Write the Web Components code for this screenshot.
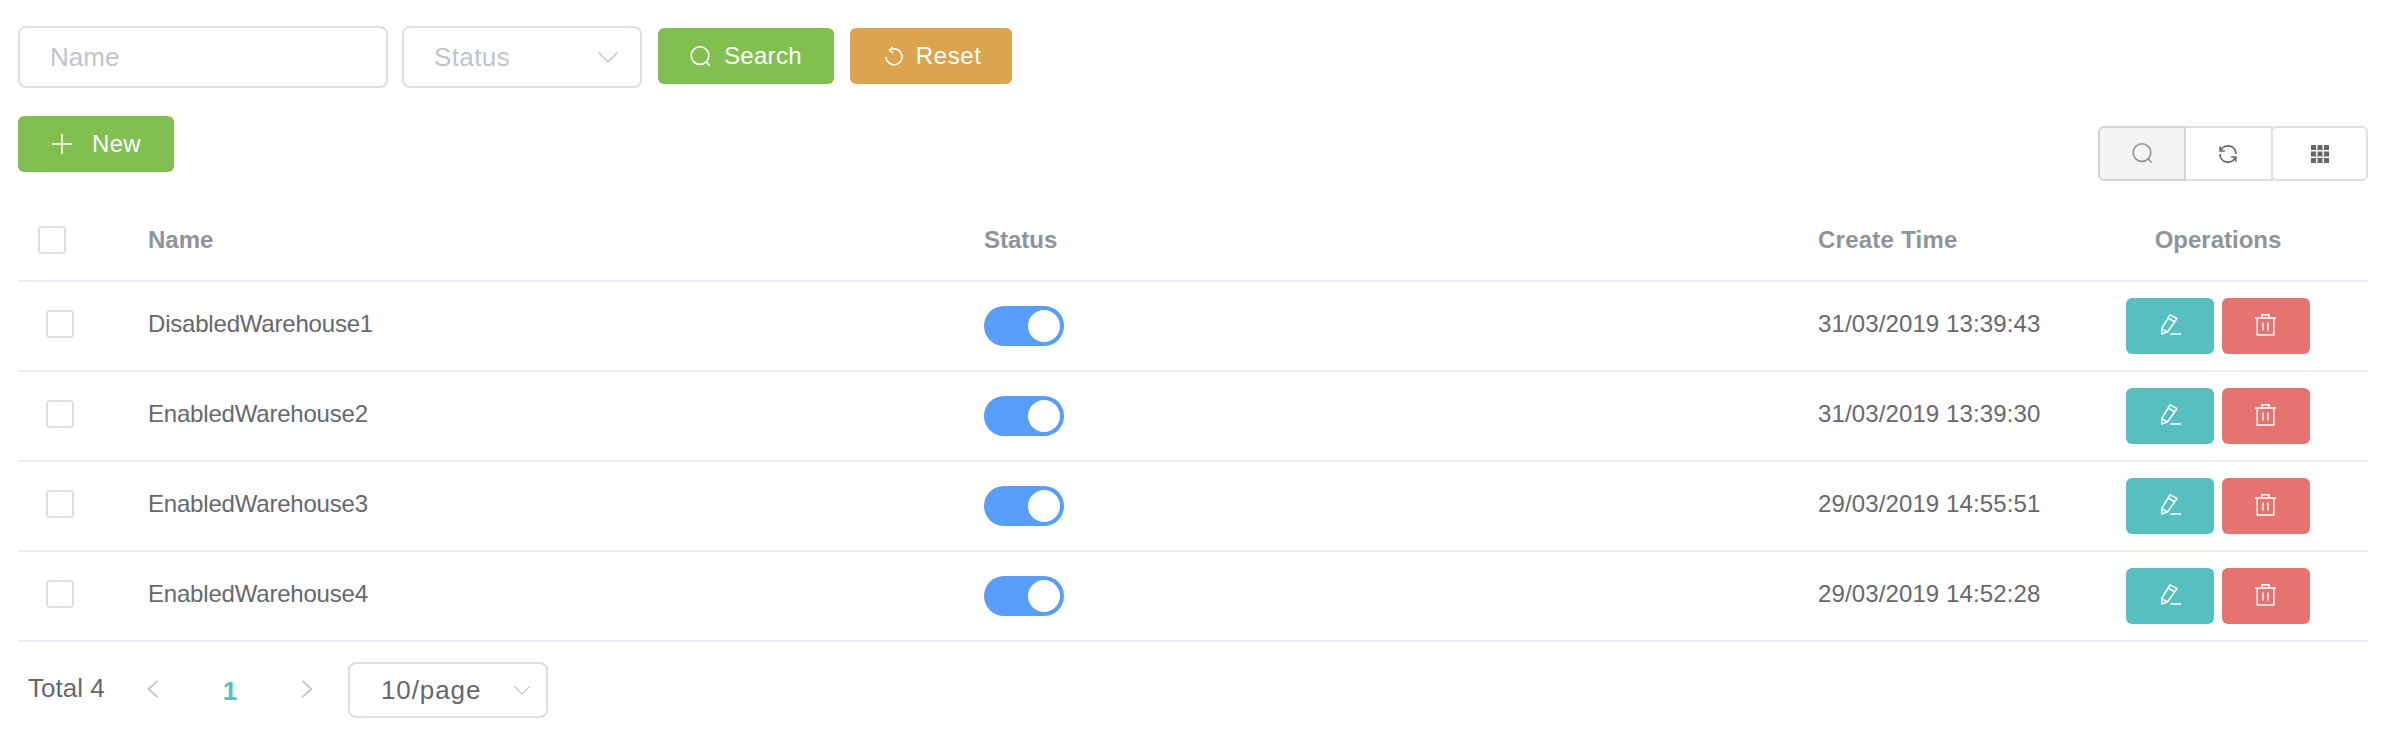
<!DOCTYPE html>
<html lang="en">
<head>
<meta charset="utf-8">
<title>Warehouses</title>
<style>
  html, body { margin: 0; background: #fff; }
  body { font-family: "Liberation Sans", Arial, sans-serif; color: #606266; }
</style>
</head>
<body>
<warehouse-page></warehouse-page>

<script>
  const ICONS = {
    search: `<svg width="21" height="21" viewBox="0 0 21 21" fill="none" stroke="currentColor" stroke-width="1.6"><circle cx="10" cy="9.6" r="8.8"/><path d="M16.4 15.8l3.2 4"/></svg>`,
    reset: `<svg width="18" height="19" viewBox="0 0 18 19" fill="none" stroke="currentColor" stroke-width="1.6"><path d="M5.6 2.6A8 8 0 1 1 1 10"/><path d="M8 .4L4.6 3l3.4 3"/></svg>`,
    plus: `<svg width="20" height="20" viewBox="0 0 20 20" fill="none" stroke="currentColor" stroke-width="1.6"><path d="M10 0v20M0 10h20"/></svg>`,
    chevronDown: `<svg viewBox="0 0 20 11" fill="none" stroke="currentColor" stroke-width="1.4"><path d="M.6.6L10 10 19.4.6"/></svg>`,
    refresh: `<svg width="18" height="18" viewBox="0 0 18 18" fill="none" stroke="currentColor" stroke-width="1.7"><path d="M2 5A8 8 0 0 1 17 9"/><path d="M16 13A8 8 0 0 1 1 9"/><path d="M5.8 6H1.2V1.4"/><path d="M12.2 12h4.6v4.6"/></svg>`,
    grid: `<svg width="18" height="18" viewBox="0 0 18 18" fill="currentColor"><path d="M0 0h5v5H0zM6.5 0h5v5h-5zM13 0h5v5h-5zM0 6.5h5v5H0zM6.5 6.5h5v5h-5zM13 6.5h5v5h-5zM0 13h5v5H0zM6.5 13h5v5h-5zM13 13h5v5h-5z"/></svg>`,
    edit: `<svg width="20" height="21" viewBox="0 0 20 21" fill="none" stroke="currentColor" stroke-width="1.5"><path d="M9 .8l7 3.8-9.4 13.2L1 20 .7 14.6z"/><path d="M7.2 4l6.8 4"/><path d="M.9 15l5.7 2.8"/><path d="M9.3 20H20"/></svg>`,
    trash: `<svg width="21" height="22" viewBox="0 0 21 22" fill="none" stroke="currentColor" stroke-width="1.5"><path d="M0 4h21"/><path d="M7 4V.8h7V4"/><path d="M2.2 4v17h16.6V4"/><path d="M8 8.4v8.2M13 8.4v8.2"/></svg>`
  };

  class ElInput extends HTMLElement {
    constructor() {
      super();
      this.attachShadow({ mode: 'open' });
      this.shadowRoot.innerHTML = `
        <style>
          :host {
            display: flex;
            align-items: center;
            box-sizing: border-box;
            height: 62px;
            padding: 0 30px;
            border: 2px solid #dcdfe6;
            border-radius: 8px;
            background: #fff;
            color: #c0c4cc;
            font-size: 26px;
          }
        </style>
        <slot></slot>
      `;
    }
  }

  class ElSelect extends HTMLElement {
    constructor() {
      super();
      this.attachShadow({ mode: 'open' });
      this.shadowRoot.innerHTML = `
        <style>
          :host {
            display: flex;
            align-items: center;
            justify-content: space-between;
            box-sizing: border-box;
            height: 62px;
            padding: 0 22px 0 30px;
            border: 2px solid #dcdfe6;
            border-radius: 8px;
            background: #fff;
            color: #c0c4cc;
            font-size: 26px;
            letter-spacing: 0.4px;
          }
          svg {
            display: block;
            width: var(--chevron-width, 20px);
            color: #c0c4cc;
          }
        </style>
        <slot></slot>
        ${ICONS.chevronDown}
      `;
    }
  }

  class ElButton extends HTMLElement {
    static get observedAttributes() {
      return ['icon'];
    }

    constructor() {
      super();
      this.attachShadow({ mode: 'open' });
    }

    connectedCallback() {
      this.render();
    }

    attributeChangedCallback() {
      this.render();
    }

    render() {
      const icon = ICONS[this.getAttribute('icon')] || '';
      this.shadowRoot.innerHTML = `
        <style>
          :host {
            display: inline-flex;
            align-items: center;
            justify-content: center;
            box-sizing: border-box;
            height: 56px;
            gap: var(--btn-gap, 13px);
            padding: 0 32px;
            border-radius: 6px;
            background: var(--btn-bg, #80bf50);
            color: #fff;
            font-size: 24px;
            letter-spacing: 0.3px;
          }
          svg {
            display: block;
            margin: var(--icon-shift, 0) 0 0 var(--icon-x, 0);
          }
        </style>
        ${icon}<slot></slot>
      `;
    }
  }

  class ElCheckbox extends HTMLElement {
    constructor() {
      super();
      this.attachShadow({ mode: 'open' });
      this.shadowRoot.innerHTML = `
        <style>
          :host {
            display: block;
            box-sizing: border-box;
            width: 28px;
            height: 28px;
            border: 2px solid #dcdfe6;
            border-radius: 4px;
            background: #fff;
          }
        </style>
      `;
    }
  }

  class ElSwitch extends HTMLElement {
    constructor() {
      super();
      this.attachShadow({ mode: 'open' });
      this.shadowRoot.innerHTML = `
        <style>
          :host {
            display: flex;
            justify-content: flex-end;
            align-items: center;
            box-sizing: border-box;
            width: 80px;
            height: 40px;
            padding-right: 4px;
            border-radius: 20px;
            background: #589ef8;
          }
          i {
            display: block;
            width: 32px;
            height: 32px;
            border-radius: 50%;
            background: #fff;
          }
        </style>
        <i></i>
      `;
    }
  }

  class TableTools extends HTMLElement {
    constructor() {
      super();
      this.attachShadow({ mode: 'open' });
      this.shadowRoot.innerHTML = `
        <style>
          :host {
            display: flex;
            height: 55px;
            margin-top: 10px;
            color: #66666a;
          }
          div {
            display: flex;
            align-items: center;
            justify-content: center;
            box-sizing: border-box;
            border: 2px solid #dcdfe6;
            background: #fff;
          }
          .search {
            width: 88px;
            border-color: #d3d4d6;
            border-radius: 6px 0 0 6px;
            background: #f4f4f5;
            color: #909399;
          }
          .refresh {
            width: 87px;
            padding-right: 2px;
            border-left: 0;
          }
          .grid {
            width: 97px;
            margin-left: -2px;
            border-radius: 6px;
          }
          svg { display: block; }
        </style>
        <div class="search">${ICONS.search}</div>
        <div class="refresh">${ICONS.refresh}</div>
        <div class="grid">${ICONS.grid}</div>
      `;
    }
  }

  class WarehouseTable extends HTMLElement {
    constructor() {
      super();
      this.attachShadow({ mode: 'open' });
    }

    get rows() {
      return [
        ['DisabledWarehouse1', '31/03/2019 13:39:43'],
        ['EnabledWarehouse2', '31/03/2019 13:39:30'],
        ['EnabledWarehouse3', '29/03/2019 14:55:51'],
        ['EnabledWarehouse4', '29/03/2019 14:52:28']
      ];
    }

    connectedCallback() {
      this.render();
    }

    render() {
      this.shadowRoot.innerHTML = `
        <style>
          :host {
            display: block;
            font-size: 24px;
            color: #66686d;
          }
          .row {
            display: grid;
            grid-template-columns: 130px 836px 834px 250px 300px;
            align-items: center;
            border-bottom: 2px solid #ebeef5;
          }
          .head {
            padding: 45px 0 26px;
            color: #909399;
            font-weight: 700;
          }
          .head el-checkbox { margin-left: 20px; }
          .created { letter-spacing: 0.25px; }
          .body { height: 88px; }
          .body el-checkbox { margin: 0 0 4px 28px; }
          .body span { margin-bottom: 4px; }
          .name { letter-spacing: -0.2px; }
          .time { letter-spacing: 0.12px; }
          .ops {
            display: flex;
            justify-content: center;
            gap: 8px;
            --icon-shift: -3px;
          }
          .ops-head { text-align: center; }
          .ops el-button {
            width: 88px;
            padding: 0;
          }
          .edit {
            --btn-bg: #58bfc0;
            --icon-x: 2px;
          }
          .remove {
            --btn-bg: #e57470;
            --icon-x: -2px;
          }
        </style>
        <div class="row head">
          <el-checkbox></el-checkbox>
          <span>Name</span>
          <span>Status</span>
          <span class="created">Create Time</span>
          <span class="ops-head">Operations</span>
        </div>
        ${this.rows.map(([name, time]) => `
          <div class="row body">
            <el-checkbox></el-checkbox>
            <span class="name">${name}</span>
            <el-switch></el-switch>
            <span class="time">${time}</span>
            <div class="ops">
              <el-button class="edit" icon="edit"></el-button>
              <el-button class="remove" icon="trash"></el-button>
            </div>
          </div>
        `).join('')}
      `;
    }
  }

  class TablePager extends HTMLElement {
    constructor() {
      super();
      this.attachShadow({ mode: 'open' });
      this.shadowRoot.innerHTML = `
        <style>
          :host {
            display: flex;
            align-items: center;
            height: 56px;
            margin-top: 20px;
            padding-left: 10px;
            font-size: 26px;
            color: #66686d;
          }
          .total {
            width: 95px;
            margin-bottom: 3px;
          }
          .arrow {
            display: flex;
            justify-content: center;
            width: 60px;
            margin-bottom: 3px;
            color: #c0c4cc;
          }
          .current {
            width: 94px;
            margin-top: 3px;
            text-align: center;
            color: #58bfc0;
            font-weight: 700;
          }
          el-select {
            width: 200px;
            height: 56px;
            margin-left: 11px;
            padding: 0 16px 0 31px;
            color: #66686d;
            letter-spacing: 0.9px;
            --chevron-width: 16px;
          }
          svg { display: block; }
        </style>
        <span class="total">Total 4</span>
        <span class="arrow"><svg width="12" height="18" viewBox="0 0 12 18" fill="none" stroke="currentColor" stroke-width="1.8"><path d="M10.6.8L1.6 9l9 8.2"/></svg></span>
        <span class="current">1</span>
        <span class="arrow"><svg width="12" height="18" viewBox="0 0 12 18" fill="none" stroke="currentColor" stroke-width="1.8"><path d="M1.4.8l9 8.2-9 8.2"/></svg></span>
        <el-select>10/page</el-select>
      `;
    }
  }

  class WarehousePage extends HTMLElement {
    constructor() {
      super();
      this.attachShadow({ mode: 'open' });
      this.shadowRoot.innerHTML = `
        <style>
          :host {
            display: block;
            width: 2350px;
            padding: 26px 32px 0 18px;
            font-family: "Liberation Sans", Arial, sans-serif;
          }
          .filters {
            display: flex;
            align-items: flex-start;
            gap: 16px;
          }
          .filters el-button { margin-top: 2px; }
          .filters el-input {
            width: 370px;
            margin-right: -2px;
          }
          .filters el-select { width: 240px; }
          .reset {
            --btn-bg: #dca44e;
            --btn-gap: 13px;
            justify-content: flex-start;
            width: 162px;
            padding: 0 0 0 35px;
            letter-spacing: 0.6px;
          }
          .toolbar {
            display: flex;
            justify-content: space-between;
            align-items: flex-start;
            height: 65px;
            margin-top: 28px;
          }
          .new {
            --btn-gap: 20px;
            padding: 0 33px 0 34px;
          }
        </style>
        <div class="filters">
          <el-input>Name</el-input>
          <el-select>Status</el-select>
          <el-button icon="search">Search</el-button>
          <el-button class="reset" icon="reset">Reset</el-button>
        </div>
        <div class="toolbar">
          <el-button class="new" icon="plus">New</el-button>
          <table-tools></table-tools>
        </div>
        <warehouse-table></warehouse-table>
        <table-pager></table-pager>
      `;
    }
  }

  customElements.define('el-input', ElInput);
  customElements.define('el-select', ElSelect);
  customElements.define('el-button', ElButton);
  customElements.define('el-checkbox', ElCheckbox);
  customElements.define('el-switch', ElSwitch);
  customElements.define('table-tools', TableTools);
  customElements.define('warehouse-table', WarehouseTable);
  customElements.define('table-pager', TablePager);
  customElements.define('warehouse-page', WarehousePage);
</script>
</body>
</html>
